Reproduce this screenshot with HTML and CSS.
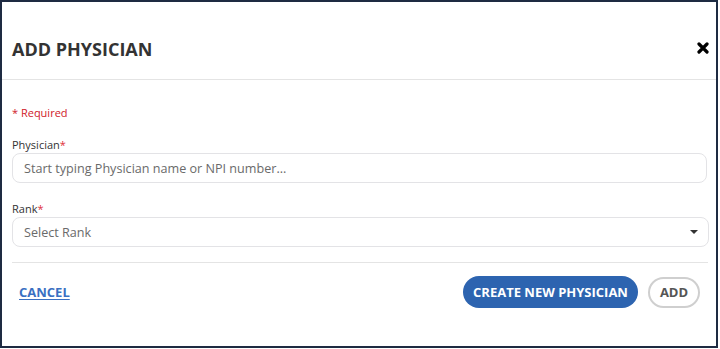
FILE: index.html
```html
<!DOCTYPE html>
<html>
<head>
<meta charset="utf-8">
<link rel="stylesheet" href="styles.css">
</head>
<body>
<div class="modal">
  <div class="modal-header">
    <h1 class="modal-title">ADD PHYSICIAN</h1>
    <button class="close-btn" aria-label="Close">
      <svg width="12" height="12" viewBox="0 0 12 12"><path d="M2 2 L10 10 M10 2 L2 10" stroke="#000" stroke-width="3.2" stroke-linecap="round"/></svg>
    </button>
  </div>
  <div class="modal-body">
    <div class="required-note">* Required</div>
    <div class="field">
      <label class="field-label">Physician<span class="star">*</span></label>
      <div class="input input-text">Start typing Physician name or NPI number...</div>
    </div>
    <div class="field field-last">
      <label class="field-label">Rank<span class="star">*</span></label>
      <div class="input input-select">
        <span>Select Rank</span>
        <span class="caret"></span>
      </div>
    </div>
    <div class="modal-footer">
      <a class="cancel-link" href="#">CANCEL</a>
      <div class="actions">
        <button class="btn btn-primary">CREATE NEW PHYSICIAN</button>
        <button class="btn btn-outline">ADD</button>
      </div>
    </div>
  </div>
</div>
</body>
</html>
```

FILE: styles.css
```css
* { box-sizing: border-box; }
html, body { margin: 0; padding: 0; background: #fff; }
body { font-family: "Open Sans", "Noto Sans", sans-serif; color: #333; }

.modal {
  width: 718px;
  height: 348px;
  border: 2px solid #1e2b42;
  background: #fff;
}

.modal-header {
  height: 78px;
  padding: 35px 7px 0 10px;
  border-bottom: 1px solid #e4e4e4;
  display: flex;
  justify-content: space-between;
  align-items: flex-start;
}
.modal-title {
  margin: 0;
  font-size: 18px;
  line-height: 24px;
  font-weight: 700;
  color: #333;
}
.close-btn {
  margin-top: 5px;
  padding: 0;
  border: 0;
  background: none;
  width: 12px;
  height: 12px;
  display: flex;
}

.modal-body {
  padding: 25px 8px 0 10px;
}
.required-note {
  font-size: 11px;
  line-height: 15px;
  color: #d0202a;
  margin-bottom: 17px;
}
.field { margin-bottom: 18px; }
.field-last { margin-bottom: 15px; }
.field-label {
  display: block;
  font-size: 11px;
  line-height: 15px;
  color: #333;
  margin-bottom: 1px;
}
.star { color: #e0303a; }
.input {
  height: 30px;
  border: 1px solid #e3e3e6;
  border-radius: 8px;
  padding: 0 11px;
  font-size: 12.6px;
  color: #6a6a6a;
  display: flex;
  align-items: center;
}
.input-text { margin-right: 1px; }
.input-select {
  margin-right: -1px;
  justify-content: space-between;
  padding-right: 10px;
}
.caret {
  width: 0;
  height: 0;
  margin-top: -1px;
  border-left: 4px solid transparent;
  border-right: 4px solid transparent;
  border-top: 4px solid #333;
}

.modal-footer {
  border-top: 1px solid #e4e4e4;
  padding: 13px 8px 0 7px;
  display: flex;
  justify-content: space-between;
  align-items: center;
}
.cancel-link {
  font-size: 13px;
  font-weight: 700;
  color: #3a70c2;
  text-decoration: underline;
  text-underline-offset: 2px;
}
.actions {
  display: flex;
  gap: 10px;
  align-items: center;
}
.btn {
  font-family: "Open Sans", "Noto Sans", sans-serif;
  font-size: 13px;
  font-weight: 700;
  border-radius: 16px;
  height: 32px;
  padding: 0;
  white-space: nowrap;
  cursor: pointer;
}
.btn-primary {
  background: #2d64b0;
  color: #fff;
  border: 0;
  width: 175px;
}
.btn-outline {
  background: #fff;
  color: #555;
  border: 2px solid #cfcfcf;
  height: 31px;
  width: 52px;
}
```
